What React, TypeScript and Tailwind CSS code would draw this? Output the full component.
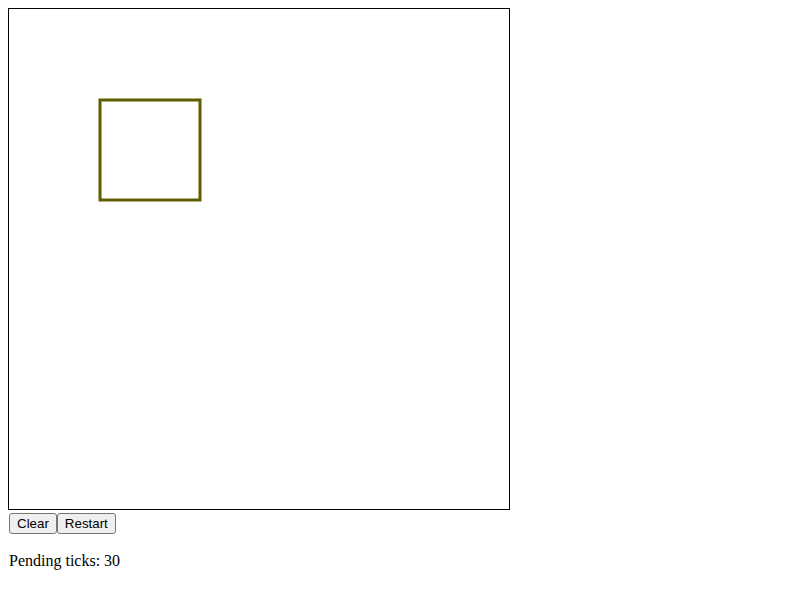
import React, { useEffect, useRef } from 'react';

export default function App() {
    const canvasRef = useRef<HTMLCanvasElement>(null);

    useEffect(() => {
        const ctx = canvasRef.current?.getContext('2d');
        if (!ctx) return;
        ctx.clearRect(0, 0, 500, 500);
        ctx.lineWidth = 3;
        ctx.strokeStyle = '#5f5f00';
        ctx.strokeRect(91, 91, 100, 100);
    }, []);

    const btn =
        'h-[21px] px-[7px] border border-[#767676] rounded-[3px] bg-[#efefef] text-[13.33px] leading-none text-black font-["Liberation_Sans",Arial,sans-serif]';

    return (
        <div className="p-2 bg-white text-black">
            <canvas ref={canvasRef} width={500} height={500} className="border border-black" />
            <div className="flex mt-[3px] ml-px">
                <button className={btn}>Clear</button>
                <button className={btn}>Restart</button>
            </div>
            <p className="mt-[18px] ml-px text-[16px] leading-[18px] font-['Liberation_Serif','Times_New_Roman',serif]">
                Pending ticks: 30
            </p>
        </div>
    );
}
